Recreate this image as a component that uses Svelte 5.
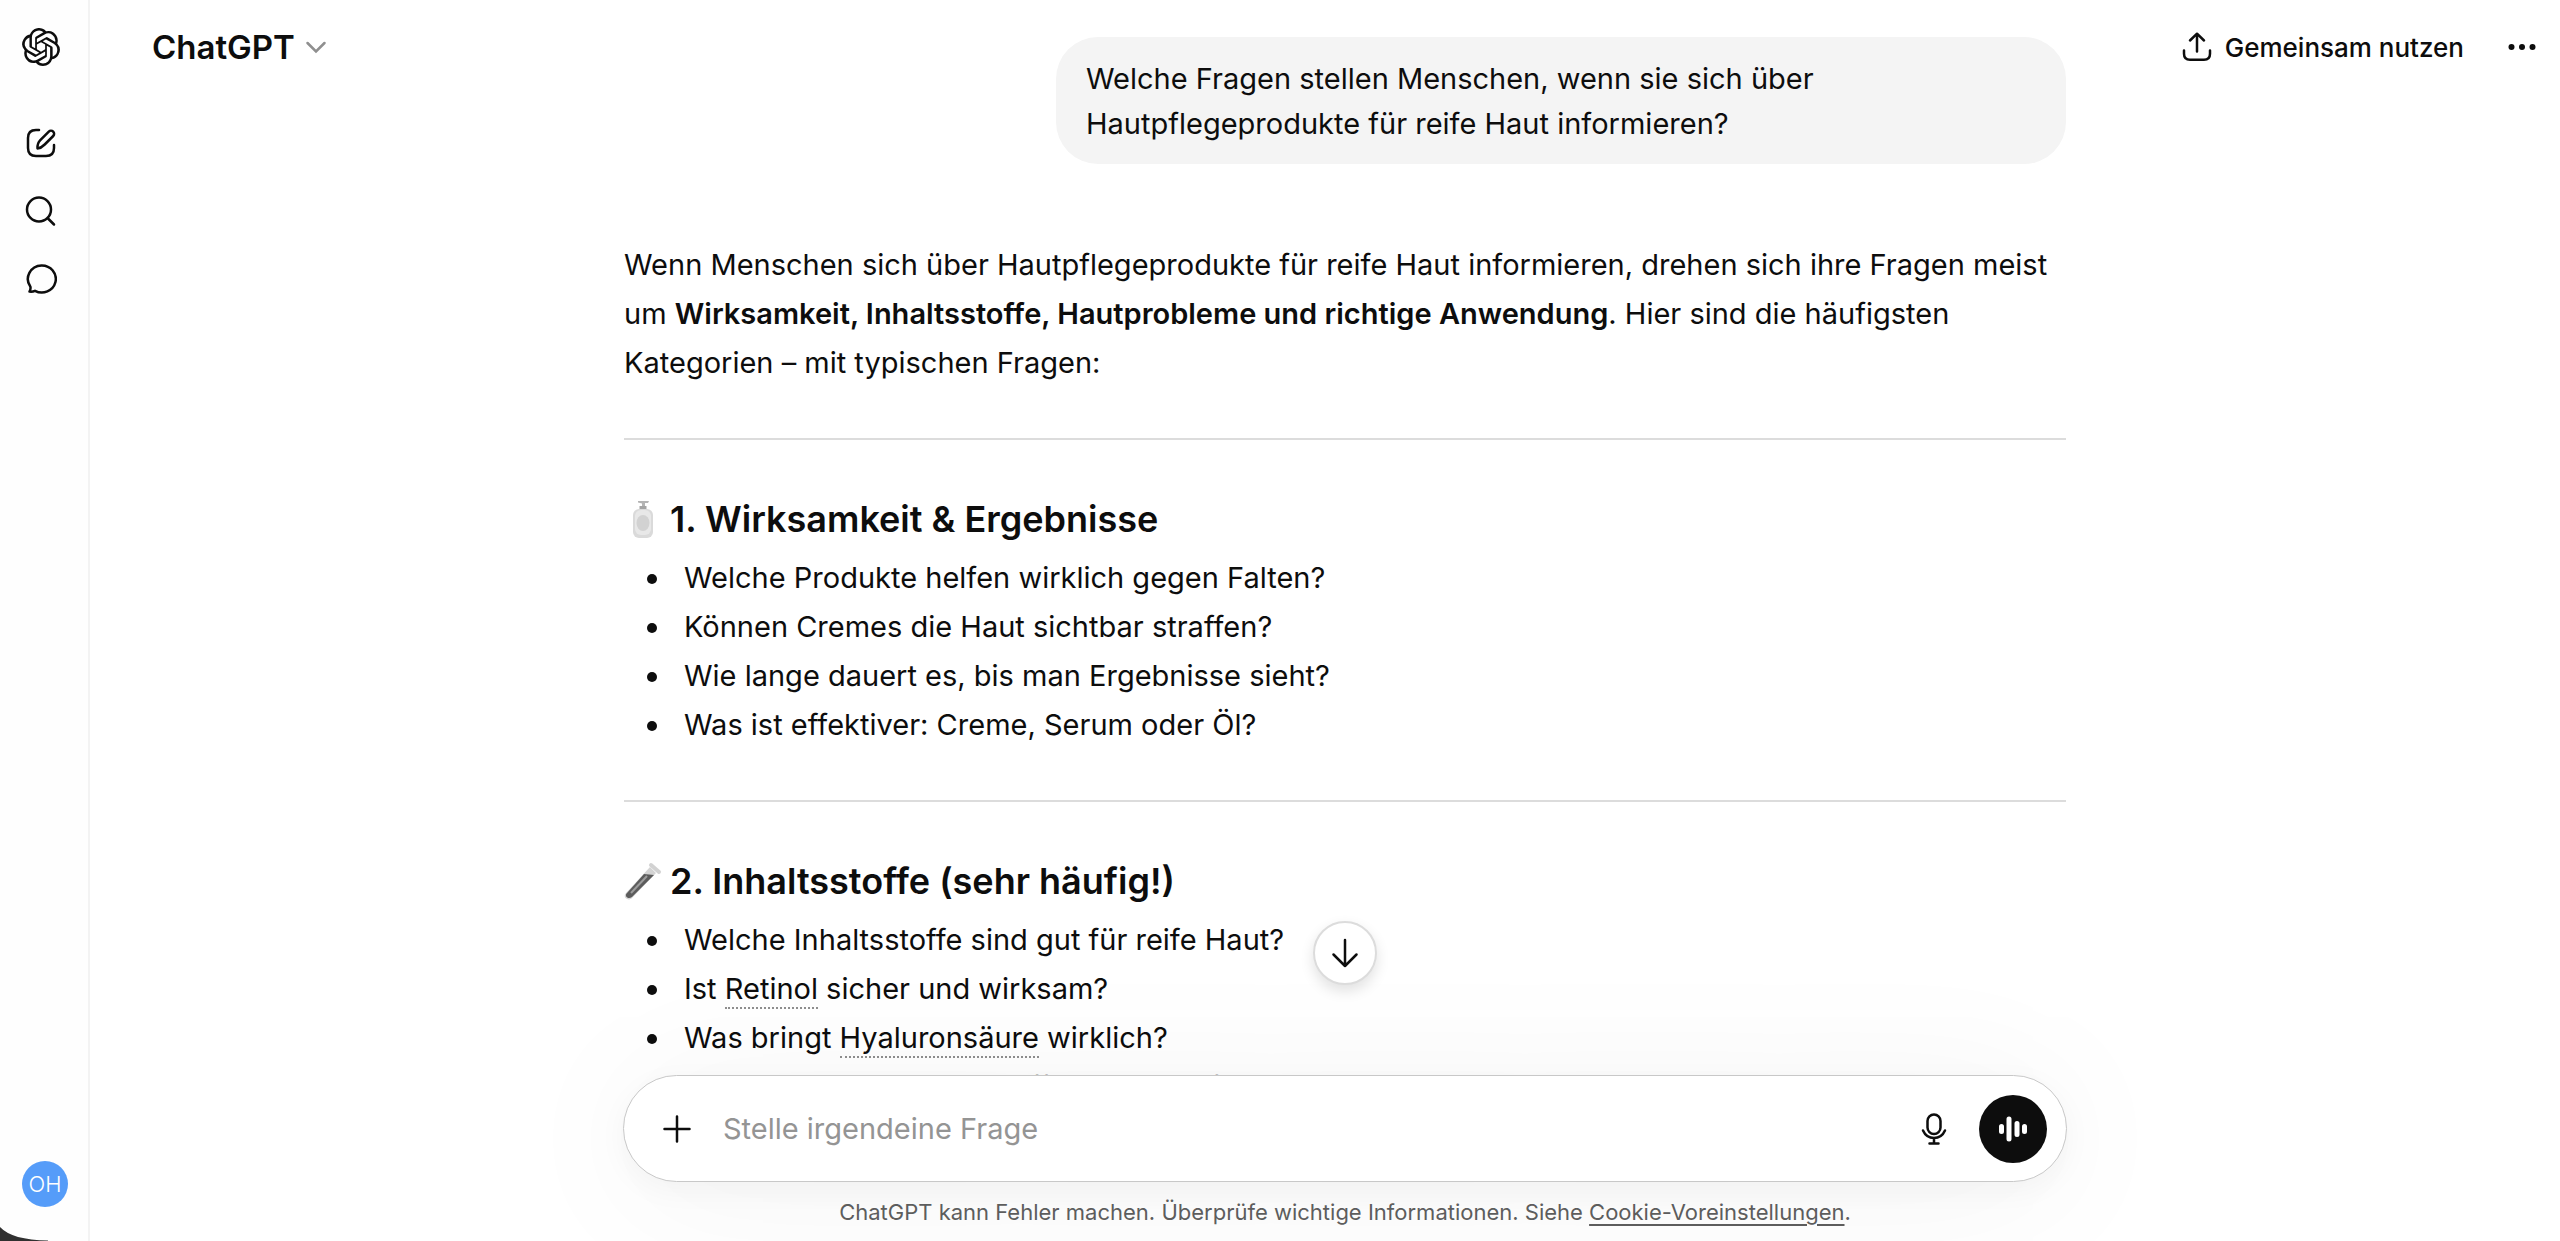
<script lang="ts">
	type Part = { text: string; term?: boolean };
	type Section = { icon: 'lotion' | 'tube'; title: string; items: Part[][] };

	const sections: Section[] = [
		{
			icon: 'lotion',
			title: '1. Wirksamkeit & Ergebnisse',
			items: [
				[{ text: 'Welche Produkte helfen wirklich gegen Falten?' }],
				[{ text: 'Können Cremes die Haut sichtbar straffen?' }],
				[{ text: 'Wie lange dauert es, bis man Ergebnisse sieht?' }],
				[{ text: 'Was ist effektiver: Creme, Serum oder Öl?' }]
			]
		},
		{
			icon: 'tube',
			title: '2. Inhaltsstoffe (sehr häufig!)',
			items: [
				[{ text: 'Welche Inhaltsstoffe sind gut für reife Haut?' }],
				[{ text: 'Ist ' }, { text: 'Retinol', term: true }, { text: ' sicher und wirksam?' }],
				[{ text: 'Was bringt ' }, { text: 'Hyaluronsäure', term: true }, { text: ' wirklich?' }],
				[{ text: 'Sind natürliche Inhaltsstoffe besser dafür?' }]
			]
		}
	];

	let question = $state('');
</script>

<div class="app">
	<nav class="sidebar" aria-label="Seitenleiste">
		<a class="logo" href="#home" aria-label="ChatGPT">
			<svg width="38" height="38" viewBox="0 0 24 24" fill="currentColor">
				<path
					d="M22.2819 9.8211a5.9847 5.9847 0 0 0-.5157-4.9108 6.0462 6.0462 0 0 0-6.5098-2.9A6.0651 6.0651 0 0 0 4.9807 4.1818a5.9847 5.9847 0 0 0-3.9977 2.9 6.0462 6.0462 0 0 0 .7427 7.0966 5.98 5.98 0 0 0 .511 4.9107 6.051 6.051 0 0 0 6.5146 2.9001A5.9847 5.9847 0 0 0 13.2599 24a6.0557 6.0557 0 0 0 5.7718-4.2058 5.9894 5.9894 0 0 0 3.9977-2.9001 6.0557 6.0557 0 0 0-.7475-7.0729zm-9.022 12.6081a4.4755 4.4755 0 0 1-2.8764-1.0408l.1419-.0804 4.7783-2.7582a.7948.7948 0 0 0 .3927-.6813v-6.7369l2.02 1.1686a.071.071 0 0 1 .038.052v5.5826a4.504 4.504 0 0 1-4.4945 4.4944zm-9.6607-4.1254a4.4708 4.4708 0 0 1-.5346-3.0137l.142.0852 4.783 2.7582a.7712.7712 0 0 0 .7806 0l5.8428-3.3685v2.3324a.0804.0804 0 0 1-.0332.0615L9.74 19.9502a4.4992 4.4992 0 0 1-6.1408-1.6464zM2.3408 7.8956a4.485 4.485 0 0 1 2.3655-1.9728V11.6a.7664.7664 0 0 0 .3879.6765l5.8144 3.3543-2.0201 1.1685a.0757.0757 0 0 1-.071 0l-4.8303-2.7865A4.504 4.504 0 0 1 2.3408 7.872zm16.5963 3.8558L13.1038 8.364 15.1192 7.2a.0757.0757 0 0 1 .071 0l4.8303 2.7913a4.4944 4.4944 0 0 1-.6765 8.1042v-5.6772a.79.79 0 0 0-.407-.667zm2.0107-3.0231l-.142-.0852-4.7735-2.7818a.7759.7759 0 0 0-.7854 0L9.409 9.2297V6.8974a.0662.0662 0 0 1 .0284-.0615l4.8303-2.7866a4.4992 4.4992 0 0 1 6.6802 4.66zM8.3065 12.863l-2.02-1.1638a.0804.0804 0 0 1-.038-.0567V6.0742a4.4992 4.4992 0 0 1 7.3757-3.4537l-.142.0805L8.704 5.459a.7948.7948 0 0 0-.3927.6813zm1.0976-2.3654l2.602-1.4998 2.6069 1.4998v2.9994l-2.5974 1.4997-2.6067-1.4997Z"
				/>
			</svg>
		</a>
		<div class="tools">
			<button type="button" aria-label="Neuer Chat">
				<svg class="line" width="32" height="32" viewBox="0 0 32 32">
					<path d="M14 3h-3q-8 0-8 8v10q0 8 8 8h10q8 0 8-8v-3" />
					<path
						d="M12.500 21.500c-.3-4 .8-6.400 2.800-8.400l8.500-8.500a3.100 3.100 0 0 1 4.400 4.400l-8.500 8.500c-2 2-3.800 3.700-7.200 4z"
					/>
				</svg>
			</button>
			<button type="button" aria-label="Suchen">
				<svg class="line" width="32" height="32" viewBox="0 0 32 32">
					<circle cx="14" cy="14.500" r="12" />
					<path d="m23 23.500 6 6" />
				</svg>
			</button>
			<button type="button" aria-label="Chats">
				<svg class="line" width="32" height="32" viewBox="0 0 32 32">
					<path
						d="M16.500 2.500a14 13.500 0 1 1-6.500 25.300c-1.800.9-3.400 1.100-5.500.8.900-1.600 1.300-3 .9-4.900A14 13.500 0 0 1 16.500 2.500z"
					/>
				</svg>
			</button>
		</div>
		<button type="button" class="avatar" aria-label="Konto">OH</button>
	</nav>

	<main>
		<div class="thread">
			<div class="bubble">
				Welche Fragen stellen Menschen, wenn sie sich über Hautpflegeprodukte für reife Haut
				informieren?
			</div>
			<article>
				<p>
					Wenn Menschen sich über Hautpflegeprodukte für reife Haut informieren, drehen sich ihre
					Fragen meist um <strong
						>Wirksamkeit, Inhaltsstoffe, Hautprobleme und richtige Anwendung</strong
					>. Hier sind die häufigsten Kategorien – mit typischen Fragen:
				</p>
				{#each sections as section}
					<hr />
					<h3>
						{#if section.icon === 'lotion'}
							<svg width="38" height="38" viewBox="0 0 38 38">
								<path d="M14 1h11l-1 2h-3v4h-3V3.500l-4-1z" fill="#b4b4b4" />
								<path d="M15.500 6h7v4h-7z" fill="#a4a4a4" />
								<rect x="9" y="9" width="20" height="29" rx="6" fill="#dadada" />
								<rect x="11" y="10" width="16" height="25" rx="6" fill="#e8e8e8" />
								<ellipse cx="19" cy="23" rx="6.500" ry="8" fill="#d2d2d2" />
							</svg>
						{:else}
							<svg width="38" height="38" viewBox="0 0 38 38">
								<path d="M2 31 26 5l6 6L8 36c-4 4-10-1-6-5z" fill="#d4d4d4" />
								<path d="M3 31 20 12l10 1L8 35c-4 3-8-1-5-4z" fill="#5c5c5c" />
								<path d="m7 31 16-17" stroke="#9c9c9c" stroke-width="2" />
								<path d="m27 3 8 7" stroke="#d2d2d2" stroke-width="4" stroke-linecap="round" />
							</svg>
						{/if}
						{section.title}
					</h3>
					<ul>
						{#each section.items as item}
							<li>
								{#each item as part}{#if part.term}<span class="term">{part.text}</span
										>{:else}{part.text}{/if}{/each}
							</li>
						{/each}
					</ul>
				{/each}
			</article>
		</div>

		<header>
			<button type="button" class="model">
				ChatGPT
				<svg width="22" height="22" viewBox="0 0 22 22">
					<path d="m2.500 7 8.500 8.500L19.500 7" />
				</svg>
			</button>
			<div class="actions">
				<button type="button" class="share">
					<svg class="line" width="32" height="32" viewBox="0 0 32 32">
						<path d="M16 20.500V3M9 9.500 16 2.700l7 6.800" />
						<path d="M3 19.500v3.200q0 6 6 6h14q6 0 6-6v-3.200" />
					</svg>
					Gemeinsam nutzen
				</button>
				<button type="button" aria-label="Mehr">
					<svg width="32" height="32" viewBox="0 0 32 32" fill="currentColor">
						<circle cx="5.500" cy="16" r="3" />
						<circle cx="16" cy="16" r="3" />
						<circle cx="26.500" cy="16" r="3" />
					</svg>
				</button>
			</div>
		</header>

		<div class="bottom">
			<button type="button" class="scroll" aria-label="Nach unten">
				<svg class="line" width="32" height="32" viewBox="0 0 32 32">
					<path d="M16 3v26M4.500 17.500 16 29l11.500-11.500" />
				</svg>
			</button>
			<form class="composer">
				<button type="button" aria-label="Dateien hinzufügen">
					<svg class="line" width="32" height="32" viewBox="0 0 32 32">
						<path d="M16 3.500v25M3.500 16h25" />
					</svg>
				</button>
				<input
					type="text"
					bind:value={question}
					placeholder="Stelle irgendeine Frage"
					aria-label="Stelle irgendeine Frage"
				/>
				<button type="button" aria-label="Diktieren">
					<svg class="line" width="32" height="32" viewBox="0 0 32 32">
						<rect x="9.500" y="1.500" width="13" height="19.500" rx="6.500" />
						<path d="M5 17.500c2 4.500 6.200 7.500 11 7.500s9-3 11-7.500M16 25v5.500M11.500 30.500h9" />
					</svg>
				</button>
				<button type="button" class="voice" aria-label="Sprachmodus">
					<svg width="32" height="32" viewBox="0 0 32 32">
						<path d="M4.500 13.500v5M12 6v20M20 10.500v11M27.500 13.500v5" />
					</svg>
				</button>
			</form>
			<p class="note">
				ChatGPT kann Fehler machen. Überprüfe wichtige Informationen. Siehe
				<a href="#cookies">Cookie-Voreinstellungen</a>.
			</p>
		</div>
	</main>

	<svg class="corner" width="48" height="14" viewBox="0 0 48 14">
		<path d="M0 0q12 13 48 13.500V14H0z" fill="#303030" />
	</svg>
</div>

<style>
	:global(body) {
		margin: 0;
	}
	.app {
		position: relative;
		display: flex;
		height: 100vh;
		overflow: hidden;
		background: #fff;
		color: #0d0d0d;
		font-family: Inter, 'Liberation Sans', sans-serif;
		font-size: 29px;
	}
	button {
		display: flex;
		align-items: center;
		justify-content: center;
		padding: 0;
		border: 0;
		background: none;
		color: inherit;
		font: inherit;
		cursor: pointer;
	}
	svg {
		flex: none;
	}
	.line {
		fill: none;
		stroke: currentColor;
		stroke-width: 2.5;
		stroke-linecap: round;
		stroke-linejoin: round;
	}
	.sidebar {
		display: flex;
		flex: none;
		flex-direction: column;
		box-sizing: border-box;
		width: 90px;
		padding: 28px 20px 34px 22px;
		border-right: 2px solid #f3f3f3;
		background: #fefefe;
	}
	.logo {
		display: flex;
		color: inherit;
	}
	.tools {
		display: flex;
		flex: 1;
		flex-direction: column;
		align-items: flex-start;
		gap: 36px;
		padding: 61px 3px;
	}
	.avatar {
		width: 46px;
		height: 46px;
		border-radius: 50%;
		background: #559cf9;
		color: #fff;
		font-size: 22px;
		font-weight: 300;
	}
	main {
		display: grid;
		flex: 1;
		min-width: 0;
		grid-template: minmax(0, 1fr) / minmax(0, 1fr);
	}
	main > * {
		grid-area: 1 / 1;
	}
	header {
		display: flex;
		align-items: center;
		align-self: start;
		justify-content: space-between;
		height: 94px;
		padding: 0 22px 0 62px;
	}
	.model {
		gap: 10px;
		font-size: 33px;
		font-weight: 600;
	}
	.model svg {
		fill: none;
		stroke: #8f8f8f;
		stroke-width: 2.5;
		stroke-linecap: round;
	}
	.actions {
		display: flex;
		gap: 42px;
	}
	.share {
		gap: 12px;
		font-size: 26px;
		font-weight: 500;
	}
	.thread,
	.bottom {
		display: flex;
		flex-direction: column;
		padding-left: 40px;
	}
	.thread {
		align-items: center;
		padding-top: 37px;
		overflow: hidden;
	}
	.bubble {
		box-sizing: border-box;
		width: 1010px;
		max-width: 100%;
		margin-left: 432px;
		padding: 19px 30px 18px;
		border-radius: 42px;
		background: #f4f4f4;
		line-height: 45px;
	}
	article {
		width: 100%;
		max-width: 1442px;
		padding-top: 76px;
		line-height: 49px;
	}
	p {
		margin: 0;
	}
	strong,
	h3 {
		font-weight: 600;
	}
	hr {
		margin: 51px 0 52px;
		border: 0;
		border-top: 2px solid #dcdcdc;
	}
	h3 {
		display: flex;
		align-items: center;
		gap: 8px;
		margin: 0 0 7px;
		font-size: 36px;
		line-height: 54px;
	}
	ul {
		margin: 0;
		padding: 0 0 0 60px;
		list-style: none;
	}
	li::before {
		display: inline-block;
		width: 10px;
		height: 10px;
		margin: 0 27px 0 -37px;
		border-radius: 50%;
		background: #0d0d0d;
		content: '';
		vertical-align: 4px;
	}
	.term {
		padding-bottom: 1px;
		border-bottom: 2px dotted #8f8f8f;
	}
	.bottom {
		align-items: center;
		align-self: end;
	}
	.scroll {
		box-sizing: border-box;
		width: 64px;
		height: 64px;
		margin-bottom: 90px;
		border: 2px solid #dcdcdc;
		border-radius: 50%;
		background: #fff;
		box-shadow: 0 6px 14px rgba(0, 0, 0, 0.12);
	}
	.composer {
		display: flex;
		align-items: center;
		box-sizing: border-box;
		width: 100%;
		max-width: 1444px;
		height: 107px;
		padding: 0 19px 0 37px;
		border: 1px solid #c8c8c8;
		border-radius: 54px;
		background: #fff;
		box-shadow:
			0 8px 30px rgba(0, 0, 0, 0.04),
			0 10px 150px rgba(0, 0, 0, 0.05);
	}
	input {
		flex: 1;
		min-width: 0;
		padding: 0 30px;
		border: 0;
		outline: 0;
		background: none;
		color: inherit;
		font: inherit;
	}
	input::placeholder {
		color: #949494;
		opacity: 1;
	}
	.voice {
		width: 68px;
		height: 68px;
		margin-left: 29px;
		border-radius: 50%;
		background: #0d0d0d;
		color: #fff;
	}
	.voice path {
		stroke: currentColor;
		stroke-width: 5;
		stroke-linecap: round;
	}
	.note {
		padding: 14px 0 12px;
		color: #5d5d5d;
		font-size: 22px;
		line-height: 33px;
	}
	.note a {
		color: inherit;
		text-underline-offset: 4px;
	}
	.corner {
		position: absolute;
		bottom: 0;
		left: 0;
	}
</style>
